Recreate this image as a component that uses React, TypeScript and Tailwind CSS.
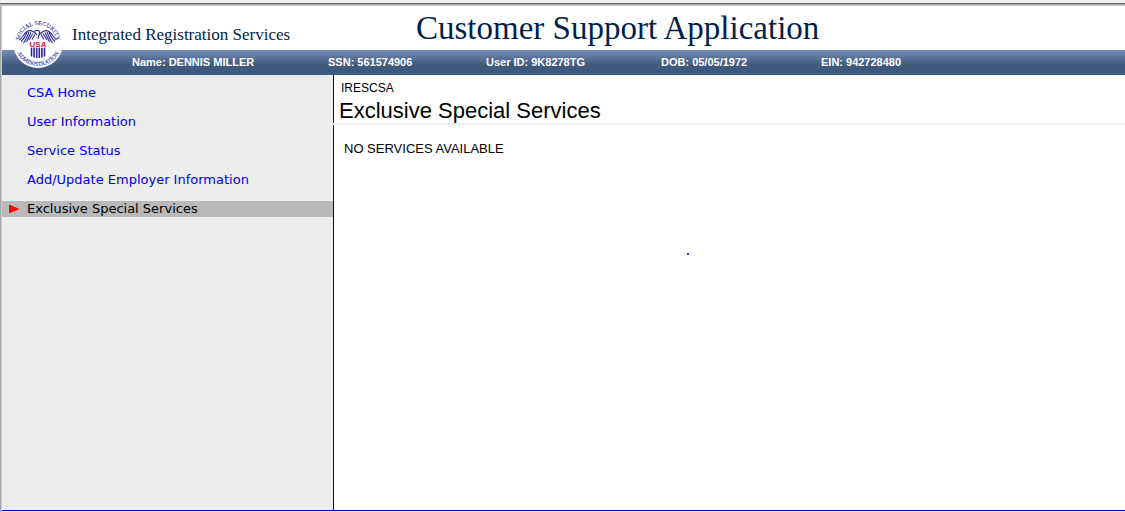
import React from 'react'

interface NavItem {
  label: string
  href: string
  active?: boolean
}

const navItems: NavItem[] = [
  { label: 'CSA Home', href: '#home' },
  { label: 'User Information', href: '#user' },
  { label: 'Service Status', href: '#status' },
  { label: 'Add/Update Employer Information', href: '#employer' },
  { label: 'Exclusive Special Services', href: '#exclusive', active: true },
]

const userDetails = [
  { label: 'Name', value: 'DENNIS MILLER', width: 'w-[196px]' },
  { label: 'SSN', value: '561574906', width: 'w-[158px]' },
  { label: 'User ID', value: '9K8278TG', width: 'w-[175px]' },
  { label: 'DOB', value: '05/05/1972', width: 'w-[160px]' },
  { label: 'EIN', value: '942728480', width: 'w-[160px]' },
]

function Seal() {
  return (
    <svg
      viewBox="0 0 50 50"
      className="absolute left-[11px] top-3 h-[50px] w-[50px]"
      role="img"
      aria-label="Social Security Administration"
    >
      <defs>
        <path id="seal-top" d="M6 26 A19 19 0 1 1 44 26" />
        <path id="seal-bottom" d="M2 25 A23 23 0 0 0 48 25" />
      </defs>
      <circle cx="25" cy="25" r="25" fill="#fff" />
      <g
        fill="#3434a6"
        stroke="#3434a6"
        strokeWidth="0.1"
        fontFamily="'Liberation Serif', serif"
        fontSize="6"
        textAnchor="middle"
      >
        <text>
          <textPath href="#seal-top" startOffset="50%">
            SOCIAL SECURITY
          </textPath>
        </text>
        <text>
          <textPath href="#seal-bottom" startOffset="50%">
            ADMINISTRATION
          </textPath>
        </text>
      </g>
      {/* eagle wings with feathers */}
      <g fill="none" stroke="#2b2b9c" strokeWidth="1.1">
        <path d="M24 17 C21 13.5 17 11.5 14 13.5 C11 15.5 10 19 6.5 22" />
        <path d="M14 14 C12.5 18 11 21 8 23.5" />
        <path d="M16 14 C14.5 18 13 22 10.5 25" />
        <path d="M18 14.5 L13.5 24" />
        <path d="M20 15.5 L16 22" />
        <path d="M22 16.5 L19 21.5" />
        <path d="M26 17 C29 13.5 33 11.5 36 13.5 C39 15.5 40 19 43.5 22" />
        <path d="M36 14 C37.5 18 39 21 42 23.5" />
        <path d="M34 14 C35.5 18 37 22 39.5 25" />
        <path d="M32 14.5 L36.5 24" />
        <path d="M30 15.5 L34 22" />
        <path d="M28 16.5 L31 21.5" />
        <path d="M21 13.5 C23.5 12 27 12 26.5 15 L25 21" />
      </g>
      {/* shield stripes */}
      <path
        d="M18.5 29.5 V38.5 M21.1 29.5 V39.5 M23.7 29.5 V40 M26.3 29.5 V40 M28.9 29.5 V39.5 M31.5 29.5 V38.5"
        stroke="#2b2b9c"
        strokeWidth="1.6"
      />
      <text
        x="25"
        y="28.5"
        fill="#e0203c"
        stroke="#fff"
        strokeWidth="1"
        paintOrder="stroke"
        fontFamily="'Liberation Sans', sans-serif"
        fontSize="8"
        fontWeight="bold"
        textAnchor="middle"
      >
        USA
      </text>
    </svg>
  )
}

function Header() {
  return (
    <header className="relative">
      <div className="flex h-11 items-center bg-white font-['Liberation_Serif',serif] text-[#001f4b]">
        <div className="w-[414px] shrink-0 pl-[70px] pt-[14px] text-[17px] leading-6">
          Integrated Registration Services
        </div>
        <h1 className="whitespace-nowrap text-[33px] leading-9">Customer Support Application</h1>
      </div>
      <dl className="flex h-[25px] items-center bg-linear-to-b from-[#7488b4] from-5% to-[#3f597d] to-60% pl-[130px] text-[11px] font-bold text-white">
        {userDetails.map((item) => (
          <div key={item.label} className={`flex shrink-0 gap-[3px] whitespace-nowrap ${item.width}`}>
            <dt>{item.label}:</dt>
            <dd>{item.value}</dd>
          </div>
        ))}
      </dl>
      <Seal />
    </header>
  )
}

function Sidebar() {
  return (
    <nav className="w-[331px] shrink-0 bg-[#ededed] pt-[10px] font-['DejaVu_Sans',sans-serif] text-[13px] leading-4">
      <ul className="flex flex-col gap-[13px]">
        {navItems.map((item) =>
          item.active ? (
            <li key={item.href} className="flex items-center bg-[#b9b9b9]">
              <svg viewBox="0 0 10 8" className="ml-[7px] mr-2 h-2 w-[10px]" aria-hidden="true">
                <path d="M0 -0.5 L10.5 4 L0 8.5 Z" fill="#f00" />
              </svg>
              <a href={item.href} aria-current="page" className="text-black">
                {item.label}
              </a>
            </li>
          ) : (
            <li key={item.href} className="pl-[25px]">
              <a href={item.href} className="text-[#0000ee]">
                {item.label}
              </a>
            </li>
          ),
        )}
      </ul>
    </nav>
  )
}

export default function App() {
  return (
    <div className="flex min-h-screen flex-col bg-white font-['Liberation_Sans',sans-serif] text-black">
      <div className="h-[3px] bg-[#f2f2f2]" />
      <div className="h-px bg-[#696969]" />
      <div className="h-px bg-[#a8a8a8]" />
      <div className="h-px bg-[#cacaca]" />
      <div className="flex grow border-l border-[#a8a8a8]">
        <div className="flex min-w-0 grow flex-col border-l border-[#cacaca]">
          <Header />
          <div className="flex grow border-b border-[#000099]">
            <Sidebar />
            <main className="flex min-w-0 grow flex-col">
              <div className="border-l border-[#000080] pl-[5px] pt-[5px]">
                <p className="pl-0.5 text-[12px] leading-4">IRESCSA</p>
                <h2 className="pt-[3px] text-[22px] leading-6">Exclusive Special Services</h2>
              </div>
              <div className="h-0.5 bg-[#ededed]" />
              <div className="grow border-l border-[#000080] pl-[10px] pt-[14px]">
                <p className="text-[13px] leading-5">NO SERVICES AVAILABLE</p>
                <div className="ml-[343px] mt-[94px] h-0.5 w-0.5 bg-[#3333ee]" />
              </div>
            </main>
          </div>
          <div className="h-px bg-[#f2f2f2]" />
        </div>
      </div>
    </div>
  )
}
